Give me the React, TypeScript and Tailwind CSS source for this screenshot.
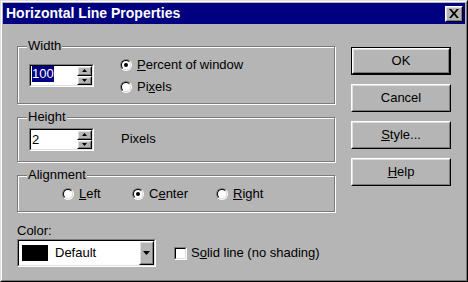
const face = "bg-[#b5b5b5]";

function Raised({ children, className = "" }: { children?: React.ReactNode; className?: string }) {
  return (
    <div className={`flex border border-t-white border-l-white border-r-black border-b-black ${face} ${className}`}>
      <div className="flex flex-1 items-center justify-center border border-t-[#dfdfdf] border-l-[#dfdfdf] border-r-[#7b7b7b] border-b-[#7b7b7b]">
        {children}
      </div>
    </div>
  );
}

function Sunken({ children, className = "", inner = "" }: { children?: React.ReactNode; className?: string; inner?: string }) {
  return (
    <div className={`flex border border-t-[#7b7b7b] border-l-[#7b7b7b] border-r-white border-b-white ${className}`}>
      <div className={`flex flex-1 border border-t-black border-l-black border-r-[#dfdfdf] border-b-[#dfdfdf] bg-white ${inner}`}>
        {children}
      </div>
    </div>
  );
}

function Radio({ checked, children }: { checked?: boolean; children: React.ReactNode }) {
  return (
    <div className="flex h-4 items-center gap-[5px]">
      <span className="flex h-3 w-3 shrink-0 rounded-full border border-t-[#7b7b7b] border-l-[#7b7b7b] border-r-white border-b-white">
        <span className="flex flex-1 items-center justify-center rounded-full border border-t-black border-l-black border-r-[#dfdfdf] border-b-[#dfdfdf] bg-white">
          {checked && <span className="h-1 w-1 rounded-full bg-black" />}
        </span>
      </span>
      <span className="leading-4">{children}</span>
    </div>
  );
}

function Group({ label, className = "", children }: { label: string; className?: string; children: React.ReactNode }) {
  return (
    <div className={`relative border border-[#7b7b7b] shadow-[inset_1px_1px_0_#fff,1px_1px_0_#fff] ${className}`}>
      <span className={`absolute -top-[9px] left-[9px] px-px leading-[15px] ${face}`}>{label}</span>
      {children}
    </div>
  );
}

function Spinner({ value, selected }: { value: string; selected?: boolean }) {
  return (
    <Sunken className="h-[23px] w-[65px] shrink-0">
      <div className="flex flex-1 pl-px">
        <span className={`h-4 leading-4 ${selected ? "bg-[#000080] text-white" : "mt-[2px]"}`}>{value}</span>
      </div>
      <div className="flex w-[15px] flex-col">
        <Raised className="flex-1">
          <svg width="5" height="3" viewBox="0 0 5 3"><path d="M0 3h5L2.5 0z" fill="black" /></svg>
        </Raised>
        <Raised className="flex-1">
          <svg width="5" height="3" viewBox="0 0 5 3"><path d="M0 0h5L2.5 3z" fill="black" /></svg>
        </Raised>
      </div>
    </Sunken>
  );
}

function Button({ children, isDefault }: { children: React.ReactNode; isDefault?: boolean }) {
  const btn = <Raised className="flex-1">{children}</Raised>;
  return isDefault ? (
    <div className="flex h-[28px] w-[100px] border border-black">{btn}</div>
  ) : (
    <div className="flex h-[28px] w-[100px]">{btn}</div>
  );
}

export default function App() {
  return (
    <div className={`h-[282px] w-[468px] border border-t-[#dfdfdf] border-l-[#dfdfdf] border-r-black border-b-black ${face} font-['Liberation_Sans',Arial,sans-serif] text-[13px] text-black`}>
      <div className="h-full border border-t-white border-l-white border-r-[#7b7b7b] border-b-[#7b7b7b] p-px">
        <div className="flex h-[21px] items-center justify-between bg-[#000080] pl-[3px] pr-[2px]">
          <span className="text-[14px] font-bold text-white">Horizontal Line Properties</span>
          <Raised className="h-[16px] w-[18px]">
            <svg width="10" height="9" viewBox="0 0 10 9">
              <path d="M0 0h2.3l2.7 3.2L7.7 0H10L6.2 4.5 10 9H7.7L5 5.8 2.3 9H0l3.8-4.5z" fill="black" />
            </svg>
          </Raised>
        </div>

        <div className="flex pl-[14px]">
          <div className="mt-[22px] flex w-[318px] flex-col">
            <Group label="Width" className="flex h-[58px] pl-[11px] pt-[10px]">
              <div className="mt-[7px]">
                <Spinner value="100" selected />
              </div>
              <div className="ml-[26px] flex flex-col gap-[6px]">
                <Radio checked>
                  <u>P</u>ercent of window
                </Radio>
                <Radio>
                  Pi<u>x</u>els
                </Radio>
              </div>
            </Group>

            <Group label="Height" className="mt-[13px] flex h-[45px] items-start pl-[11px] pt-[10px]">
              <Spinner value="2" />
              <span className="ml-[27px] mt-[3px] leading-4">Pixels</span>
            </Group>

            <Group label="Alignment" className="mt-[13px] flex h-[37px] pl-[44px] pt-[10px]">
              <div className="w-[70px]">
                <Radio>
                  <u>L</u>eft
                </Radio>
              </div>
              <div className="w-[84px]">
                <Radio checked>
                  C<u>e</u>nter
                </Radio>
              </div>
              <Radio>
                <u>R</u>ight
              </Radio>
            </Group>

            <div className="mt-[11px] leading-[15px]">Color:</div>
            <div className="mt-px flex items-center">
              <Sunken className="h-[28px] w-[139px]" inner="items-center">
                <span className="ml-[3px] h-[16px] w-[26px] bg-black" />
                <span className="ml-[7px] flex-1">Default</span>
                <Raised className="h-full w-[15px]">
                  <svg width="7" height="4" viewBox="0 0 7 4"><path d="M0 0h7L3.5 4z" fill="black" /></svg>
                </Raised>
              </Sunken>
              <Sunken className="ml-[18px] h-[13px] w-[13px]" />
              <span className="ml-[4px]">
                S<u>o</u>lid line (no shading)
              </span>
            </div>
          </div>

          <div className="ml-[16px] mt-[23px] flex flex-col gap-[9px]">
            <Button isDefault>OK</Button>
            <Button>Cancel</Button>
            <Button>
              <span><u>S</u>tyle...</span>
            </Button>
            <Button>
              <span><u>H</u>elp</span>
            </Button>
          </div>
        </div>
      </div>
    </div>
  );
}
